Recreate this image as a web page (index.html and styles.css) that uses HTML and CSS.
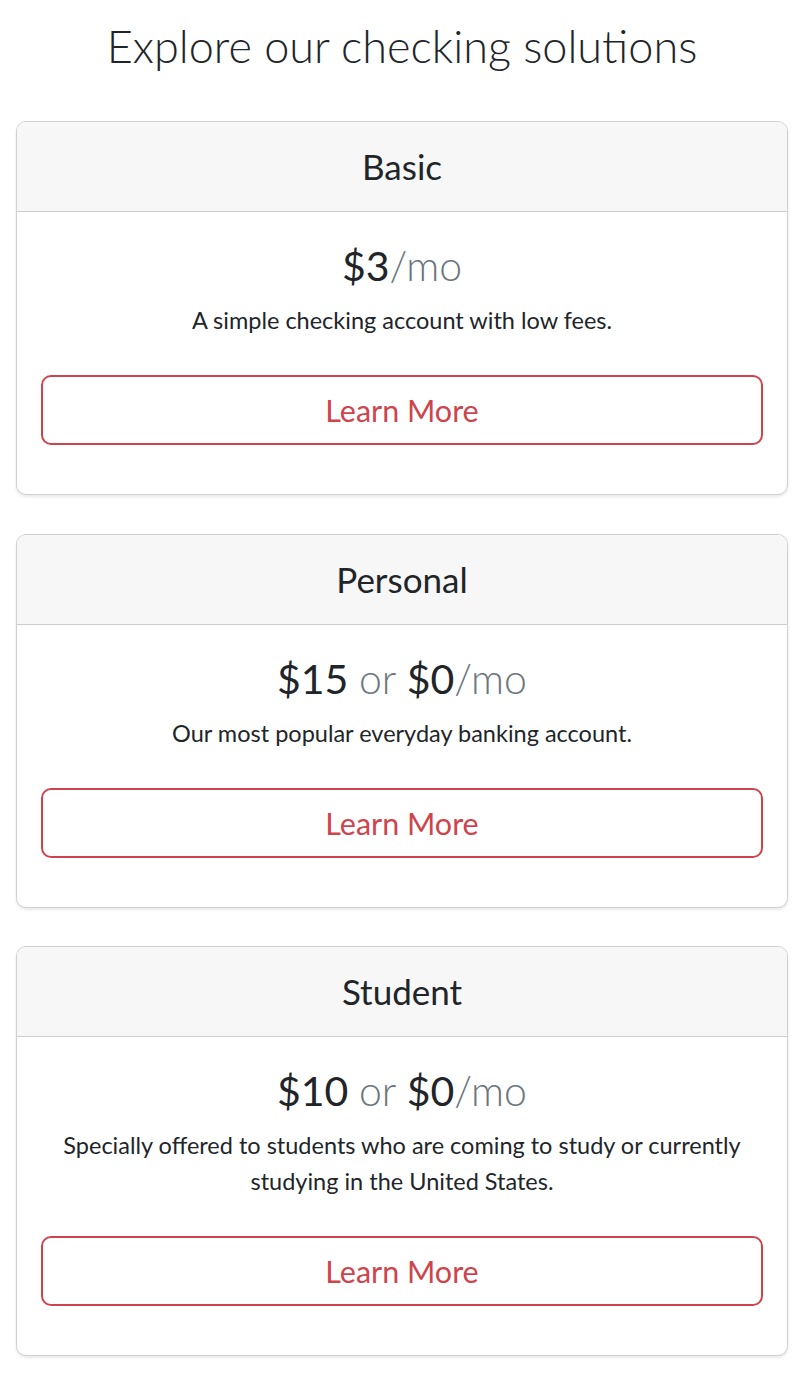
FILE: index.html
```html
<!DOCTYPE html>
<html lang="en">
<head>
<meta charset="utf-8">
<title>Explore our checking solutions</title>
<link rel="stylesheet" href="styles.css">
</head>
<body>
<main class="page">
  <h1 class="title">Explore our checking solutions</h1>
  <div class="cards">
    <section class="card">
      <header class="card-header"><h2>Basic</h2></header>
      <div class="card-body">
        <p class="price">$3<span class="muted">/mo</span></p>
        <p class="desc">A simple checking account with low fees.</p>
        <button class="btn">Learn More</button>
      </div>
    </section>
    <section class="card">
      <header class="card-header"><h2>Personal</h2></header>
      <div class="card-body">
        <p class="price">$15 <span class="muted">or</span> $0<span class="muted">/mo</span></p>
        <p class="desc">Our most popular everyday banking account.</p>
        <button class="btn">Learn More</button>
      </div>
    </section>
    <section class="card">
      <header class="card-header"><h2>Student</h2></header>
      <div class="card-body">
        <p class="price">$10 <span class="muted">or</span> $0<span class="muted">/mo</span></p>
        <p class="desc">Specially offered to students who are coming to study or currently studying in the United States.</p>
        <button class="btn">Learn More</button>
      </div>
    </section>
  </div>
</main>
</body>
</html>
```
FILE: styles.css
```css
* { box-sizing: border-box; }
html, body { margin: 0; padding: 0; background: #fff; }
body {
  font-family: Lato, "Open Sans", "Liberation Sans", sans-serif;
  color: #212529;
}
.page {
  padding: 0 24px 38px 16px;
}
.title {
  margin: 0;
  padding: 19px 0 0;
  height: 121px;
  text-align: center;
  font-weight: 300;
  font-size: 45px;
  line-height: 54px;
}
.cards {
  display: flex;
  flex-direction: column;
  gap: 38.5px;
}
.card {
  border: 1px solid #d0d0d0;
  border-radius: 10px;
  box-shadow: 0 2px 3px rgba(0,0,0,0.09);
  overflow: hidden;
  background: #fff;
}
.card-header {
  background: #f7f7f7;
  border-bottom: 1px solid #cdcdcd;
  height: 90px;
  display: flex;
  align-items: center;
  justify-content: center;
}
.card-header h2 {
  margin: 0;
  font-size: 35px;
  font-weight: 400;
  line-height: 1;
}
.card-body {
  padding: 24px 24px 49px;
  text-align: center;
}
.price {
  margin: 0;
  font-size: 41px;
  line-height: 60px;
  font-weight: 400;
}
.muted {
  color: #6c757d;
  font-weight: 300;
}
.desc {
  margin: 6px 0 37px;
  font-size: 23.5px;
  line-height: 36px;
}
.btn {
  display: block;
  width: 100%;
  height: 70px;
  border: 2px solid #cf444c;
  border-radius: 10px;
  background: #fff;
  color: #cf444c;
  font-family: inherit;
  font-size: 30.5px;
  padding: 0;
}
```
